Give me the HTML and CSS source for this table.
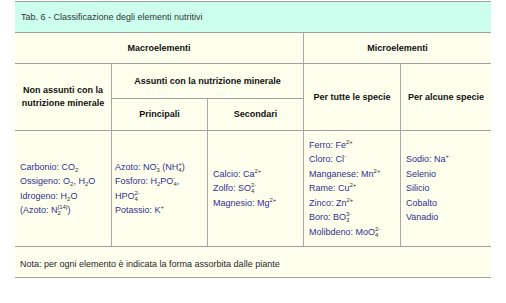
FILE: index.html
```html
<!DOCTYPE html>
<html lang="it">
<head>
<meta charset="utf-8">
<title>Tab. 6</title>
<link rel="stylesheet" href="styles.css">
</head>
<body>
<div class="tab">
  <div class="cell title">Tab. 6 - Classificazione degli elementi nutritivi</div>

  <div class="cell head macro">Macroelementi</div>
  <div class="cell head micro sep">Microelementi</div>

  <div class="cell head nonass">Non assunti con la<br>nutrizione minerale</div>
  <div class="cell head assunti sep">Assunti con la nutrizione minerale</div>
  <div class="cell head tutte sep">Per tutte le specie</div>
  <div class="cell head alcune sep">Per alcune specie</div>
  <div class="cell head princ sep">Principali</div>
  <div class="cell head second sep">Secondari</div>

  <div class="cell data d1">
    <div class="lines">
      <div>Carbonio: CO<sub>2</sub></div>
      <div>Ossigeno: O<sub>2</sub>, H<sub>2</sub>O</div>
      <div>Idrogeno: H<sub>2</sub>O</div>
      <div>(Azoto: N<sub>2</sub><sup>[14]</sup>)</div>
    </div>
  </div>
  <div class="cell data d2 sep narrow">
    <div class="lines">
      <div>Azoto: NO<sub>3</sub><sup>-</sup> (NH<sub>4</sub><sup>+</sup>)</div>
      <div>Fosforo: H<sub>2</sub>PO<sub>4</sub><sup>-</sup>,</div>
      <div>HPO<sub>4</sub><sup>2-</sup></div>
      <div>Potassio: K<sup>+</sup></div>
    </div>
  </div>
  <div class="cell data d3 sep">
    <div class="lines">
      <div>Calcio: Ca<sup>2+</sup></div>
      <div>Zolfo: SO<sub>4</sub><sup>2-</sup></div>
      <div>Magnesio: Mg<sup>2+</sup></div>
    </div>
  </div>
  <div class="cell data d4 sep">
    <div class="lines">
      <div>Ferro: Fe<sup>2+</sup></div>
      <div>Cloro: Cl<sup>-</sup></div>
      <div>Manganese: Mn<sup>2+</sup></div>
      <div>Rame: Cu<sup>2+</sup></div>
      <div>Zinco: Zn<sup>2+</sup></div>
      <div>Boro: BO<sub>3</sub><sup>3-</sup></div>
      <div>Molibdeno: MoO<sub>4</sub><sup>2-</sup></div>
    </div>
  </div>
  <div class="cell data d5 sep">
    <div class="lines">
      <div>Sodio: Na<sup>+</sup></div>
      <div>Selenio</div>
      <div>Silicio</div>
      <div>Cobalto</div>
      <div>Vanadio</div>
    </div>
  </div>

  <div class="cell note">Nota: per ogni elemento è indicata la forma assorbita dalle piante</div>
</div>
</body>
</html>
```

FILE: styles.css
```css
html, body {
  margin: 0;
  padding: 0;
  background: #ffffff;
}

body {
  padding: 1px 0 0 15px;
  font-family: "Liberation Sans", Arial, sans-serif;
  font-size: 9px;
}

.tab {
  display: grid;
  width: 476px;
  grid-template-columns: 96px 96px 96px 97px 91px;
  grid-template-rows: 31px 31px 35px 32px 116px 31px;
  border-bottom: 1px solid #a0a0a0;
}

.cell {
  box-sizing: border-box;
  border-top: 1px solid #a0a0a0;
  background: #ffffee;
  display: flex;
  align-items: center;
}

.sep {
  border-left: 1px solid #a8a8a8;
}

.title {
  grid-column: 1 / -1;
  grid-row: 1;
  background: #ccffee;
  color: #333333;
  padding-left: 6px;
}

.head {
  justify-content: center;
  text-align: center;
  font-weight: bold;
  color: #111111;
  line-height: 13px;
}

.macro { grid-column: 1 / 4; grid-row: 2; }
.micro { grid-column: 4 / 6; grid-row: 2; }
.nonass { grid-column: 1; grid-row: 3 / 5; }
.assunti { grid-column: 2 / 4; grid-row: 3; }
.tutte { grid-column: 4; grid-row: 3 / 5; }
.alcune { grid-column: 5; grid-row: 3 / 5; }
.princ { grid-column: 2; grid-row: 4; }
.second { grid-column: 3; grid-row: 4; }

.data {
  grid-row: 5;
  padding-left: 5px;
  color: #303090;
  line-height: 14.4px;
}

.lines {
  white-space: nowrap;
}

.narrow { padding-left: 3px; }

sub, sup {
  font-size: 6px;
  line-height: 0;
  color: #333333;
}

sub { vertical-align: -2px; }
sup { vertical-align: 4px; }
sub + sup {
  display: inline-block;
  min-width: 3.4px;
  margin-left: -3.4px;
}

.note {
  grid-column: 1 / -1;
  grid-row: 6;
  color: #1e1e1e;
  padding-left: 5px;
  padding-top: 3px;
}
```
